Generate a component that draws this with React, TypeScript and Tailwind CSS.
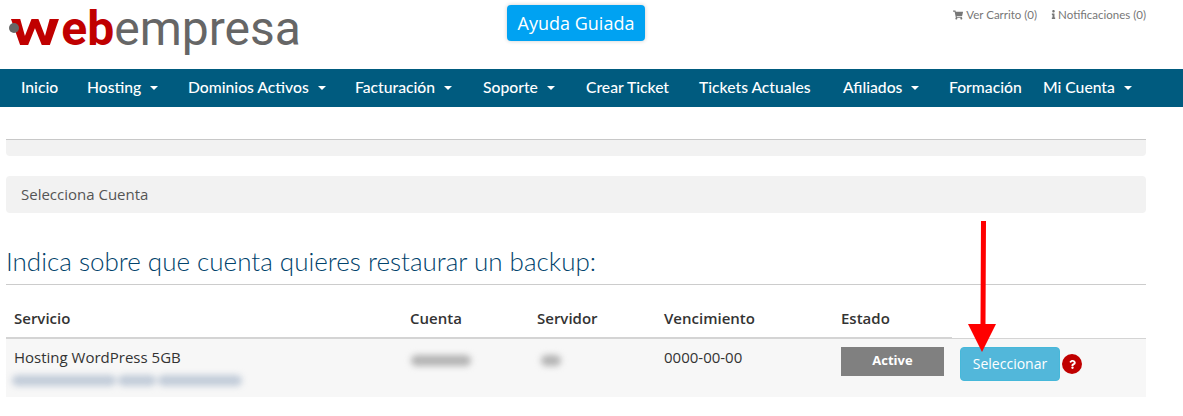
import React from 'react';
import { FaShoppingCart, FaInfo, FaQuestion } from 'react-icons/fa';

const navItems = [
  { name: 'Inicio', w: 'w-[66px]', caret: false },
  { name: 'Hosting', w: 'w-[101px]', caret: true },
  { name: 'Dominios Activos', w: 'w-[167px]', caret: true },
  { name: 'Facturación', w: 'w-[128px]', caret: true },
  { name: 'Soporte', w: 'w-[103px]', caret: true },
  { name: 'Crear Ticket', w: 'w-[113px]', caret: false },
  { name: 'Tickets Actuales', w: 'w-[144px]', caret: false },
  { name: 'Afiliados', w: 'w-[106px]', caret: true },
  { name: 'Formación', w: 'w-[94px]', caret: false },
  { name: 'Mi Cuenta', w: 'w-[110px]', caret: true },
];

const columns = ['Servicio', 'Cuenta', 'Servidor', 'Vencimiento', 'Estado'];
const gridCols = 'grid grid-cols-[396px_127px_127px_177px_119px_1fr]';

function App() {
  return (
    <div className="relative h-[416px] w-[1183px] overflow-hidden bg-white font-['Open_Sans',sans-serif] text-[#333]">
      {/* Header */}
      <header className="flex h-[69px] items-start">
        <div className="flex h-[60px] w-[507px] items-start pl-[9px] font-['Roboto',sans-serif] text-[48px] leading-[57px]">
          <span className="relative z-10 mt-[23px] h-[10px] w-[10px] shrink-0 rounded-full bg-[#666]" />
          <span className="-ml-[9px] mr-[16px] origin-left scale-x-[1.42] font-bold text-[#c00000]">w</span>
          <span className="font-bold text-[#c00000]">eb</span>
          <span className="font-normal text-[#666]">empresa</span>
        </div>
        <button className="mt-[5px] h-[36px] w-[138px] rounded-[4px] bg-[#00a2f2] text-center text-[18px] font-medium text-white shadow-[0_0_4px_rgba(0,0,0,0.2)]">
          Ayuda Guiada
        </button>
        <div className="ml-auto mr-[37px] mt-[7px] flex gap-[14px] font-['Lato',sans-serif] text-[11.5px] leading-[15px] text-[#777]">
          <span className="flex items-center gap-[3px]">
            <FaShoppingCart className="h-[10px] w-[10px]" />
            Ver Carrito (0)
          </span>
          <span className="flex items-center gap-[2px]">
            <FaInfo className="h-[9px] w-[5px]" />
            Notificaciones (0)
          </span>
        </div>
      </header>

      {/* Navigation */}
      <nav className="flex h-[38px] items-center bg-[#005b7f] pb-[1px] pl-[21px] font-['Lato',sans-serif] text-[15.7px] font-medium text-white">
        {navItems.map((item) => (
          <div key={item.name} className={`flex shrink-0 items-center ${item.w}`}>
            {item.name}
            {item.caret && <span className="ml-[9px] mt-[2px] h-0 w-0 border-x-[4px] border-t-[4px] border-x-transparent border-t-white" />}
          </div>
        ))}
      </nav>

      {/* Content */}
      <main className="ml-[6px] w-[1140px]">
        <div className="mt-[32px] h-[17px] rounded-b-[4px] border-t border-[#c8c8c8] bg-[#f2f2f2]" />
        <div className="mt-[20px] flex h-[37px] items-center rounded-[4px] bg-[#f2f2f2] pl-[15px] text-[15px] text-[#555]">
          Selecciona Cuenta
        </div>
        <h1 className="mt-[32px] h-[40px] border-b border-[#ccc] font-['Lato',sans-serif] text-[26px] font-light leading-[33px] text-[#00426b]">
          Indica sobre que cuenta quieres restaurar un backup:
        </h1>

        <div className={`${gridCols} h-[54px] text-[15px] font-semibold leading-[20px]`}>
          {columns.map((c) => (
            <div key={c} className="border-b-2 border-[#d4d4d4] pl-[8px] pt-[23px]">{c}</div>
          ))}
          <div className="border-b border-[#d4d4d4]" />
        </div>
        <div className={`${gridCols} h-[58px] bg-[#f7f7f7] text-[15px] leading-[20px]`}>
          <div className="pl-[8px] pt-[8px]">
            Hosting WordPress 5GB
            <div className="-ml-[2px] mt-[8px] flex gap-[2px] blur-[3px]">
              <div className="h-[11px] w-[104px] rounded-full bg-[#c2ccd9]" />
              <div className="h-[11px] w-[38px] rounded-full bg-[#c2ccd9]" />
              <div className="h-[11px] w-[84px] rounded-full bg-[#c2ccd9]" />
            </div>
          </div>
          <div className="pl-[8px] pt-[16px]">
            <div className="ml-[1px] h-[11px] w-[60px] rounded-full bg-[#b4b4b4] blur-[3px]" />
          </div>
          <div className="pl-[8px] pt-[16px]">
            <div className="ml-[4px] h-[11px] w-[20px] rounded-full bg-[#b4b4b4] blur-[3px]" />
          </div>
          <div className="pl-[8px] pt-[8px]">0000-00-00</div>
          <div className="col-span-2 flex items-start pl-[8px] pt-[8px]">
            <div className="h-[29px] w-[103px] bg-[#808080] text-center text-[13px] font-bold leading-[27px] text-white">Active</div>
            <button className="ml-[16px] h-[34px] w-[100px] rounded-[4px] border border-[#46b8da] bg-[#52b7da] text-center text-[14px] text-white">
              Seleccionar
            </button>
            <span className="ml-[2px] mt-[7px] flex h-[20px] w-[20px] items-center justify-center rounded-full bg-[#c00000] text-white">
              <FaQuestion className="h-[9px] w-[9px]" />
            </span>
          </div>
        </div>
      </main>

      {/* Red arrow drawn over the table */}
      <svg className="absolute left-[960px] top-[215px]" width="50" height="150" viewBox="0 0 50 150">
        <path d="M21 6 H26 L25.5 109 H36 L22 137 L8 109 H20.5 Z" fill="#ff0000" />
      </svg>
    </div>
  );
}

export default App;
